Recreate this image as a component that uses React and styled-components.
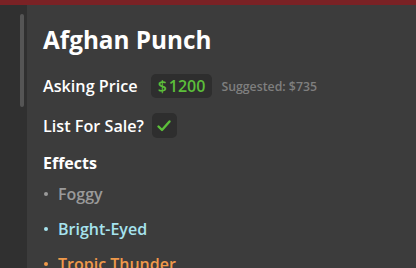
import React from "react";
import styled, { createGlobalStyle } from "styled-components";

const Global = createGlobalStyle`
  html, body { margin: 0; padding: 0; background: #2f2f2f; }
  body { font-family: "Open Sans", "Noto Sans", sans-serif; overflow: hidden; }
`;

const Screen = styled.div`
  width: 416px;
  height: 268px;
  display: flex;
  flex-direction: column;
  overflow: hidden;
`;

const TopBar = styled.div`
  height: 5px;
  background: #7a2225;
  flex: none;
`;

const Body = styled.div`
  flex: 1;
  display: flex;
  min-height: 0;
`;

const Sidebar = styled.div`
  width: 27px;
  flex: none;
  background: #303030;
  display: flex;
  justify-content: flex-end;
  padding-top: 9px;
  padding-right: 3px;
  box-sizing: border-box;
`;

const ScrollThumb = styled.div`
  width: 4px;
  height: 93px;
  border-radius: 2px;
  background: #555555;
`;

const Panel = styled.div`
  flex: 1;
  background: #3c3c3c;
  padding: 19px 16px 0 16px;
  display: flex;
  flex-direction: column;
  color: #ffffff;
`;

const Title = styled.h1`
  margin: 0;
  font-size: 24.3px;
  line-height: 32px;
  font-weight: 700;
  color: #ffffff;
`;

const Row = styled.div`
  display: flex;
  align-items: center;
  gap: ${(p) => p.$gap || 10}px;
  margin-top: ${(p) => p.$mt || 0}px;
`;

const Label = styled.span`
  font-size: 16.2px;
  font-weight: 600;
  color: #ffffff;
`;

const Badge = styled.div`
  background: #2e2e2e;
  border-radius: 5px;
  height: ${(p) => p.$h || 24}px;
  min-width: ${(p) => p.$w || 0}px;
  padding: 0 ${(p) => p.$px || 0}px;
  box-sizing: border-box;
  display: flex;
  align-items: center;
  justify-content: center;
`;

const Price = styled.span`
  font-size: 16px;
  font-weight: 600;
  color: #5cbf3a;
`;

const Dollar = styled.span`
  margin-right: 2px;
`;

const Suggested = styled.span`
  font-size: 12.3px;
  font-weight: 600;
  color: #7f7f7f;
`;

const SectionTitle = styled.h2`
  margin: 14px 0 0 0;
  font-size: 16px;
  line-height: 22px;
  font-weight: 700;
  color: #ffffff;
`;

const EffectList = styled.ul`
  list-style: none;
  margin: 3px 0 0 0;
  padding: 0;
`;

const Effect = styled.li`
  display: flex;
  align-items: center;
  gap: 10px;
  height: 34.7px;
  font-size: 16px;
  font-weight: 600;
  color: ${(p) => p.$color};
  &::before {
    content: "";
    width: 4px;
    height: 4px;
    border-radius: 50%;
    background: ${(p) => p.$color};
    margin-left: 1px;
  }
`;

const Check = () => (
  <svg width="16" height="16" viewBox="0 0 16 16" fill="none">
    <path d="M2.5 8.5 L6 12 L13.5 3.5" stroke="#5cbf3a" strokeWidth="2.4" strokeLinecap="round" strokeLinejoin="round" />
  </svg>
);

export default function App() {
  return (
    <Screen>
      <Global />
      <TopBar />
      <Body>
        <Sidebar>
          <ScrollThumb />
        </Sidebar>
        <Panel>
          <Title>Afghan Punch</Title>
          <Row $mt={18}>
            <Label>Asking Price</Label>
            <Row $gap={9}>
              <Badge $px={7} style={{ marginLeft: 3 }}>
                <Price>
                  <Dollar>$</Dollar>1200
                </Price>
              </Badge>
              <Suggested>Suggested: $735</Suggested>
            </Row>
          </Row>
          <Row $mt={15} $gap={8}>
            <Label>List For Sale?</Label>
            <Badge $w={25} $h={25}>
              <Check />
            </Badge>
          </Row>
          <SectionTitle>Effects</SectionTitle>
          <EffectList>
            <Effect $color="#9a9a9a">Foggy</Effect>
            <Effect $color="#a6e3ee">Bright-Eyed</Effect>
            <Effect $color="#f0994a">Tropic Thunder</Effect>
          </EffectList>
        </Panel>
      </Body>
    </Screen>
  );
}
